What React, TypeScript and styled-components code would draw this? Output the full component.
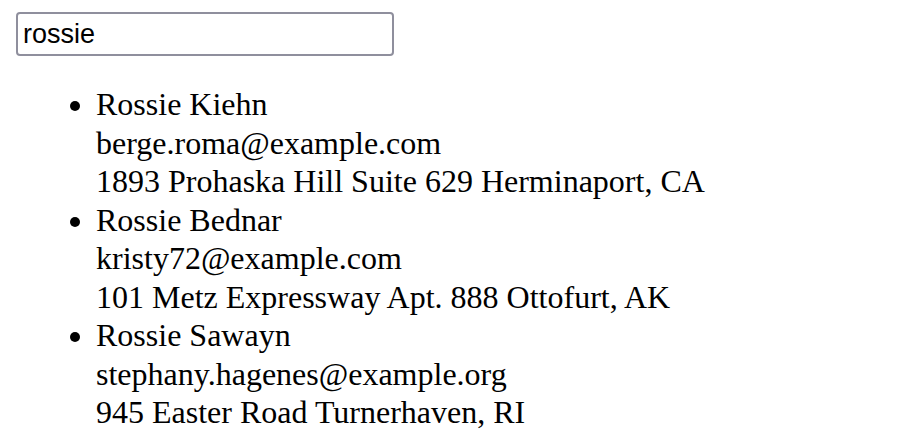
import React from "react";
import styled, { createGlobalStyle } from "styled-components";

type Person = { name: string; email: string; address: string };

const people: Person[] = [
  {
    name: "Rossie Kiehn",
    email: "berge.roma@example.com",
    address: "1893 Prohaska Hill Suite 629 Herminaport, CA",
  },
  {
    name: "Rossie Bednar",
    email: "kristy72@example.com",
    address: "101 Metz Expressway Apt. 888 Ottofurt, AK",
  },
  {
    name: "Rossie Sawayn",
    email: "stephany.hagenes@example.org",
    address: "945 Easter Road Turnerhaven, RI",
  },
];

const GlobalStyle = createGlobalStyle`
  body {
    margin: 12px 16px;
    background: #fff;
    color: #000;
    font-family: "Liberation Serif", "Times New Roman", serif;
    font-size: 32px;
    line-height: 38.5px;
  }
`;

const SearchInput = styled.input`
  display: block;
  box-sizing: border-box;
  width: 378px;
  height: 44px;
  margin: 0;
  padding: 0 5px;
  border: 2px solid #8f8f9d;
  border-radius: 4px;
  font-family: "Liberation Sans", Arial, sans-serif;
  font-size: 27px;
  color: #000;
  outline: none;
`;

const List = styled.ul`
  margin: 29px 0 0;
  padding-left: 80px;
`;

const Item = styled.li`
  list-style: disc;
`;

const Line = styled.div``;

export default function App() {
  const [query, setQuery] = React.useState("rossie");
  const shown = people.filter((p) =>
    p.name.toLowerCase().includes(query.toLowerCase())
  );
  return (
    <>
      <GlobalStyle />
      <SearchInput value={query} onChange={(e) => setQuery(e.target.value)} />
      <List>
        {shown.map((p) => (
          <Item key={p.email}>
            <Line>{p.name}</Line>
            <Line>{p.email}</Line>
            <Line>{p.address}</Line>
          </Item>
        ))}
      </List>
    </>
  );
}
